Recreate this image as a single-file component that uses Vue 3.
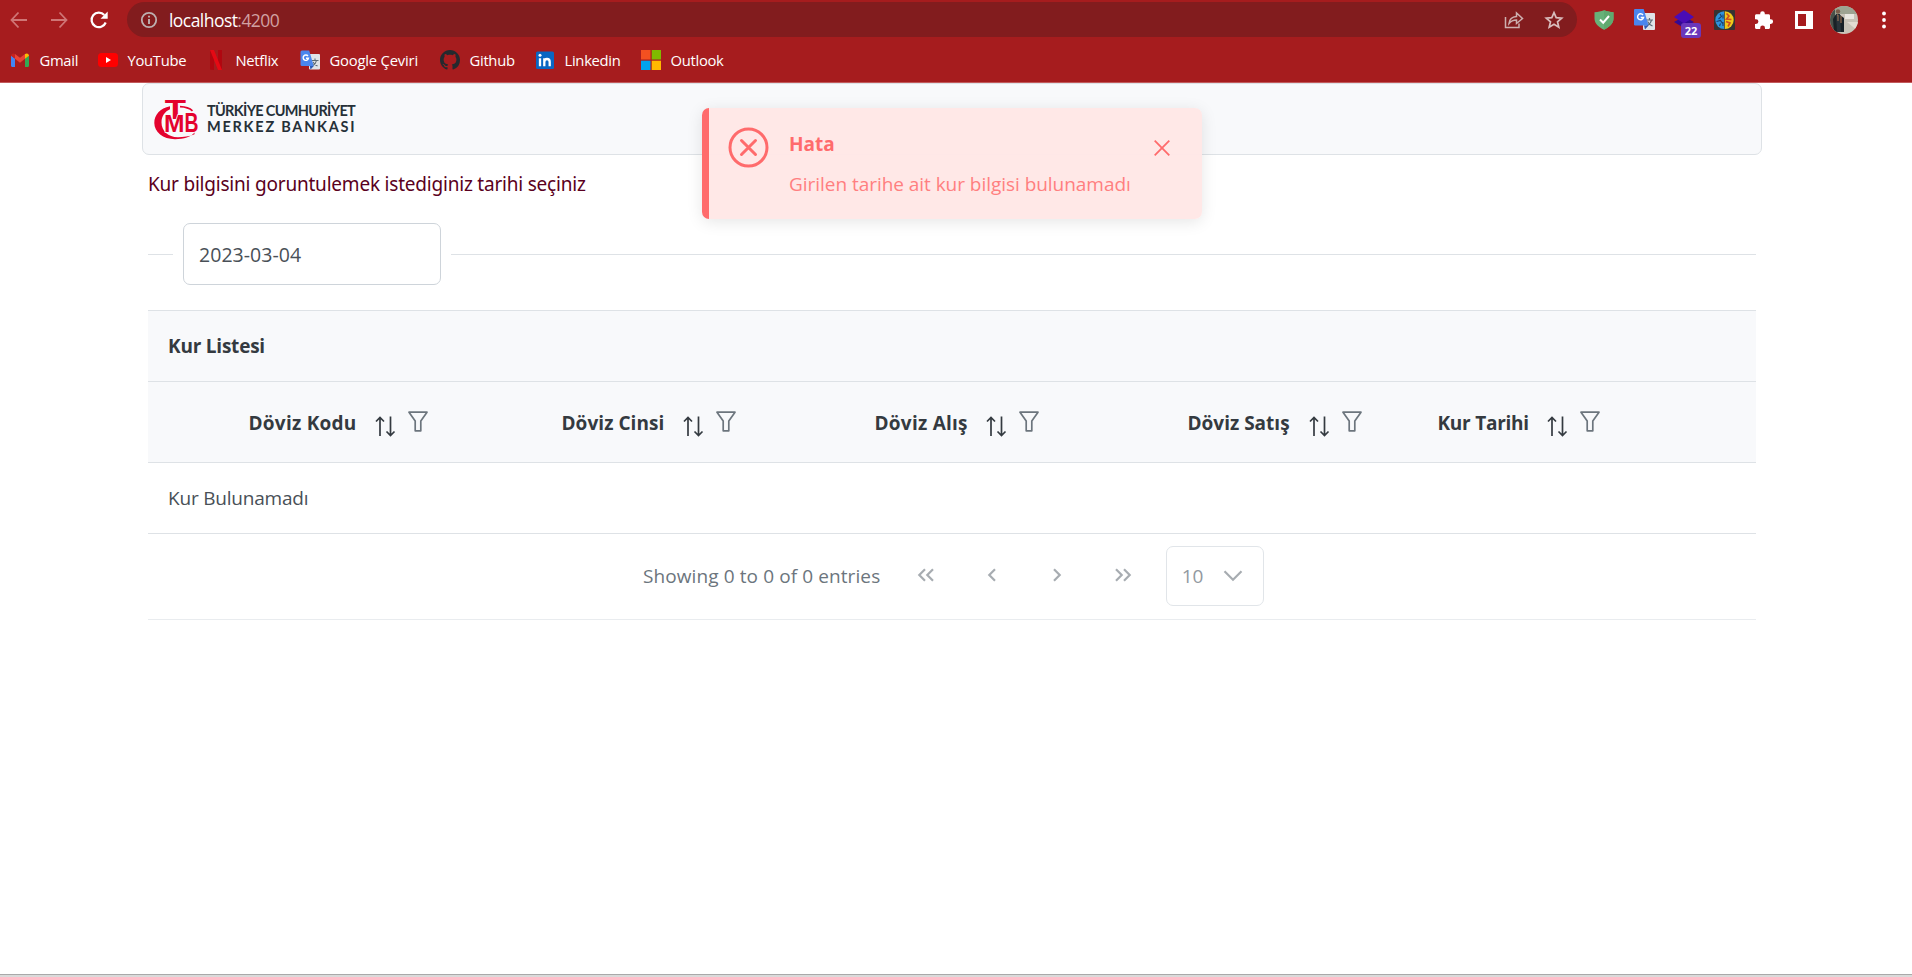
<script setup>
const bookmarks = [
  { name: 'Gmail', icon: 'gmail' },
  { name: 'YouTube', icon: 'youtube' },
  { name: 'Netflix', icon: 'netflix' },
  { name: 'Google Çeviri', icon: 'translate' },
  { name: 'Github', icon: 'github' },
  { name: 'Linkedin', icon: 'linkedin' },
  { name: 'Outlook', icon: 'outlook' },
]

const columns = [
  { label: 'Döviz Kodu', width: 108, spacing: 0.25 },
  { label: 'Döviz Cinsi', width: 103, spacing: 0.05 },
  { label: 'Döviz Alış', width: 93, spacing: 0.25 },
  { label: 'Döviz Satış', width: 103, spacing: 0 },
  { label: 'Kur Tarihi', width: 91, spacing: -0.25 },
]
</script>

<template>
  <div class="window">
    <header class="browser">
      <div class="toolbar">
        <div class="nav">
          <svg width="20" height="20" viewBox="0 0 20 20"><path d="M18 10H3M9.500 2.500L2.500 10l7 7.500" fill="none" stroke="#cf7676" stroke-width="1.800" /></svg>
          <svg width="20" height="20" viewBox="0 0 20 20"><path d="M2 10h15M10.500 2.500L17.500 10l-7 7.500" fill="none" stroke="#cf7676" stroke-width="1.800" /></svg>
          <svg width="20" height="20" viewBox="0 0 20 20"><path d="M16.700 12.500A7.300 7.300 0 1 1 15.300 5" fill="none" stroke="#fff" stroke-width="2.200" /><path d="M18.700 1.500v7.200h-7.200z" fill="#fff" /></svg>
        </div>
        <div class="address">
          <svg width="18" height="18" viewBox="0 0 18 18"><circle cx="9" cy="9" r="7.200" fill="none" stroke="#bdb0b0" stroke-width="1.800" /><path d="M9 8v5M9 4.700v1.800" stroke="#bdb0b0" stroke-width="1.900" /></svg>
          <span class="url">localhost<span class="port">:4200</span></span>
          <svg class="share" width="20" height="20" viewBox="0 0 20 20"><path d="M1.500 7v10.500h13.500V13.500M5 13.500C5.500 8.500 8.500 6.800 12.500 6.500V3l6 5.500-6 5v-3.500C9 10 7 11 5 13.500z" fill="none" stroke="#cdb0b0" stroke-width="1.500" /></svg>
          <svg width="20" height="20" viewBox="0 0 20 20"><path d="M10 2.600l2.200 5.100 5.500.5-4.200 3.600 1.300 5.400L10 14.300l-4.800 2.900 1.300-5.400-4.200-3.600 5.500-.5z" fill="none" stroke="#d8bcbc" stroke-width="1.700" /></svg>
        </div>
        <div class="extensions">
          <svg width="20" height="20" viewBox="0 0 20 20"><path d="M10 .3c3 1.200 6 1.800 9.500 1.900v6.300c0 5-4 8.500-9.500 11.300C4.500 17 .500 13.500 .500 8.500V2.200C4 2.100 7 1.500 10 .3z" fill="#67b279" /><path d="M10 .3c3 1.200 6 1.800 9.500 1.900v6.300c0 5-4 8.500-9.500 11.300z" fill="#5fa96f" /><path d="M6 9.500l3.200 3.200L15 6" fill="none" stroke="#fff" stroke-width="2" /></svg>
          <svg width="21" height="21" viewBox="0 0 21 21"><rect x="9" y="4" width="12" height="17" rx="1" fill="#dfe3e8" /><path d="M12 11h7M15.500 9v2M13 17c2.500-1.500 4-3.500 4.500-6M13.500 12.500c1 2 2.500 3.500 5 4.500" fill="none" stroke="#5b6b76" stroke-width="1.200" /><path d="M1.500 0h8.200l4.800 16.500H1.500A1.300 1.300 0 0 1 0 15V1.500A1.400 1.400 0 0 1 1.500 0z" fill="#4a86ee" /><path d="M10 16.500h4.500L11 20.500z" fill="#2b59b4" /><path d="M9 6a3 3 0 1 0 .5 2.600H6.700" fill="none" stroke="#fff" stroke-width="1.500" /></svg>
          <div class="layers">
            <svg width="20" height="19" viewBox="0 0 20 19"><path d="M10 6.500L20 12l-10 6L0 12z" fill="#330a93" /><path d="M10 0l10 7-10 6.500L0 7z" fill="#4a0cb5" /></svg>
            <span class="count">22</span>
          </div>
          <svg width="21" height="20" viewBox="0 0 21 20"><rect width="21" height="20" rx="1" fill="#353232" /><path d="M10.200 1.200a8.900 8.900 0 0 0 0 17.800z" fill="#2d93dc" /><path d="M10.800 1.200a8.900 8.900 0 0 1 0 17.800z" fill="#f0c91a" /><path d="M6 4l1.500 2.500L4.500 9M2.500 11.500l4-1 2 3M5.500 16l1-2.500M9 4.500v4M9 12v4" fill="none" stroke="#1b3f6d" stroke-width="1.100" /><path d="M12.500 3.500l2.500 2.500-2.500 3 5 .5M12 11.500l4 1.500-2 3.500" fill="none" stroke="#cf4c1f" stroke-width="1.600" /></svg>
          <svg width="20" height="20" viewBox="0 0 20 20"><path d="M8.500 1.200a2.300 2.300 0 0 1 2.300 2.300v.8h3.700c.9 0 1.500.6 1.500 1.500v3.500h.8a2.300 2.300 0 0 1 0 4.600H16v3.600c0 .9-.6 1.500-1.500 1.500H11v-1a2.400 2.400 0 0 0-4.800 0v1H2.500C1.600 19 1 18.400 1 17.500V14h1a2.400 2.400 0 0 0 0-4.800H1V5.800c0-.9.600-1.500 1.500-1.500h3.700v-.8a2.300 2.300 0 0 1 2.300-2.300z" fill="#fff" /></svg>
          <svg width="18" height="18" viewBox="0 0 18 18"><path d="M0 0h18v18H0zM3 3v12h8V3z" fill="#fff" fill-rule="evenodd" /></svg>
          <svg width="28" height="28" viewBox="0 0 28 28">
            <defs><clipPath id="avatar"><circle cx="14" cy="14" r="14" /></clipPath></defs>
            <g clip-path="url(#avatar)">
              <rect width="28" height="28" fill="#c9c4b8" /><rect width="28" height="8" fill="#9da492" /><rect width="5" height="28" fill="#48514a" />
              <path d="M15 8h9v5h-9z" fill="#e9e8e1" /><path d="M17 16l11 9v-9z" fill="#e3dcd2" />
              <path d="M3 13l3-5 4 1 4 3v14H4z" fill="#192126" /><path d="M6 8h4l1 18H7z" fill="#29333a" />
              <circle cx="8" cy="5.500" r="2.200" fill="#785d4c" /><path d="M7 9h1v6M11 10v7" stroke="#a97955" fill="none" />
            </g>
          </svg>
          <svg width="6" height="18" viewBox="0 0 6 18"><g fill="#fff"><circle cx="3" cy="2.500" r="1.900" /><circle cx="3" cy="9" r="1.900" /><circle cx="3" cy="15.500" r="1.900" /></g></svg>
        </div>
      </div>
      <nav class="bookmarks">
        <a v-for="b in bookmarks" :key="b.name" class="bookmark">
          <svg width="20" height="20" viewBox="0 0 20 20">
            <g v-if="b.icon === 'gmail'">
              <path d="M1 5.500v10c0 .8.600 1.500 1.300 1.500H5V8.500z" fill="#4285f4" /><path d="M15 8.500V17h2.700c.7 0 1.300-.7 1.300-1.500v-10z" fill="#34a853" />
              <path d="M5 8.800V4l5 3.800L15 4v4.800l-5 3.900z" fill="#ea4335" /><path d="M1 5.800c0-2.300 2.100-3.100 4-1.800v4.800z" fill="#c5221f" /><path d="M19 5.800c0-2.300-2.100-3.100-4-1.800v4.800z" fill="#fbbc04" />
            </g>
            <g v-else-if="b.icon === 'youtube'"><rect x="0" y="3" width="20" height="14" rx="3.500" fill="#f00" /><path d="M8 7l5 3-5 3z" fill="#fff" /></g>
            <g v-else-if="b.icon === 'netflix'"><path d="M4 0h4v20l-4-.4zM12 0h4v19.600l-4 .4z" fill="#b00710" /><path d="M4 0h4l8 20h-4z" fill="#e50914" /></g>
            <g v-else-if="b.icon === 'translate'">
              <rect x="9" y="4" width="11" height="15.500" rx="1" fill="#dfe3e8" /><path d="M12 10.500h6.500M15 8.500v2M12.500 16c2.500-1.500 3.500-3 4-5.500M13 12c1 2 2.500 3 4.500 4" fill="none" stroke="#5b6b76" stroke-width="1.100" />
              <path d="M2 .500h7.200l4.500 15.500H2A1.500 1.500 0 0 1 .500 14.500V2A1.500 1.500 0 0 1 2 .500z" fill="#4a86ee" /><path d="M9.800 16h4l-3.300 3.500z" fill="#2b59b4" /><path d="M8 6a2.700 2.700 0 1 0 .5 2.200H6" fill="none" stroke="#fff" stroke-width="1.400" />
            </g>
            <path v-else-if="b.icon === 'github'" transform="scale(1.25)" fill="#24292e" d="M8 0C3.580 0 0 3.580 0 8c0 3.540 2.290 6.530 5.470 7.590.4.070.55-.17.55-.38 0-.19-.01-.82-.01-1.490-2.010.37-2.530-.49-2.690-.94-.09-.23-.48-.94-.82-1.130-.28-.15-.68-.52-.01-.53.63-.01 1.080.58 1.230.82.72 1.210 1.870.87 2.330.66.07-.52.28-.87.51-1.070-1.780-.2-3.640-.89-3.640-3.950 0-.87.31-1.590.82-2.150-.08-.2-.36-1.020.08-2.120 0 0 .67-.21 2.200.82.64-.18 1.320-.27 2-.27s1.360.09 2 .27c1.530-1.040 2.200-.82 2.200-.82.44 1.100.16 1.920.08 2.120.51.56.82 1.270.82 2.150 0 3.070-1.870 3.750-3.650 3.950.29.25.54.73.54 1.480 0 1.070-.01 1.930-.01 2.200 0 .21.15.46.55.38A8.010 8.010 0 0 0 16 8c0-4.420-3.580-8-8-8z" />
            <g v-else-if="b.icon === 'linkedin'"><rect x="1" y="1.500" width="18" height="17.500" rx="1.500" fill="#0a66c2" /><path d="M5 8.200v8M9.300 16.200v-8M9.300 12c0-4 5.400-4 5.400 0v4.200" fill="none" stroke="#fff" stroke-width="2.300" /><circle cx="5" cy="5.300" r="1.500" fill="#fff" /></g>
            <g v-else><path d="M0 0h9.500v9.500H0z" fill="#f35020" /><path d="M10.700 0H20v9.500h-9.300z" fill="#7fb900" /><path d="M0 10.700h9.500V20H0z" fill="#00a3ee" /><path d="M10.700 10.700H20V20h-9.300z" fill="#ffb900" /></g>
          </svg>
          <span :class="['name', b.icon]">{{ b.name }}</span>
        </a>
      </nav>
    </header>

    <main class="page">
      <section class="brand">
        <svg width="54" height="52" viewBox="0 0 54 52">
          <path d="M20 14.200C10 16 4.300 23 4.300 31C4.300 40 13 47.200 25 47.200C34 47.200 41 45 44.500 40.500V42.300C39.500 44.500 33 45.300 28 45.300C18 45.300 11.500 38.500 11.500 30.500C11.500 24 15 19.500 20 17.300z" fill="#e4032e" />
          <path d="M30 14.600C35 14.800 39.500 16 42.500 18.800" fill="none" stroke="#e4032e" stroke-width="1.600" />
          <g fill="#e4032e" font-family="Liberation Sans, sans-serif" font-weight="700">
            <text x="14.700" y="26.500" font-size="28.500" textLength="21.300" lengthAdjust="spacingAndGlyphs">T</text>
            <text x="14" y="40" font-size="24" textLength="20.500" lengthAdjust="spacingAndGlyphs" stroke="#f8f9fb" stroke-width="1.600" paint-order="stroke">M</text>
            <text x="34.500" y="40" font-size="27.500" textLength="14" lengthAdjust="spacingAndGlyphs">B</text>
          </g>
        </svg>
        <div class="brand-name">
          <span class="brand-top">TÜRKİYE CUMHURİYET</span>
          <span class="brand-bottom">MERKEZ BANKASI</span>
        </div>
      </section>

      <p class="prompt">Kur bilgisini goruntulemek istediginiz tarihi seçiniz</p>

      <div class="divider">
        <div class="date">2023-03-04</div>
      </div>

      <section class="table">
        <div class="caption"><span>Kur Listesi</span></div>
        <div class="head">
          <div v-for="c in columns" :key="c.label" class="th">
            <span class="label" :style="{ width: c.width + 'px', letterSpacing: c.spacing + 'px' }">{{ c.label }}</span>
            <svg class="sort" width="21" height="21" viewBox="0 0 21 21"><path d="M5 20V1.500M1 5.500l4-4 4 4M15.500.500V19M11.500 15.500l4 4 4-4" fill="none" stroke="#343a40" stroke-width="1.700" /></svg>
            <svg class="filter" width="20" height="21" viewBox="0 0 20 21"><path d="M1 1.200h18L12.800 10v9.800H7.200V10z" fill="none" stroke="#6c757d" stroke-width="1.700" stroke-linejoin="round" /></svg>
          </div>
        </div>
        <div class="empty"><span>Kur Bulunamadı</span></div>
        <div class="paginator">
          <span class="summary">Showing 0 to 0 of 0 entries</span>
          <div class="pages">
            <svg width="18" height="14" viewBox="0 0 18 14"><path d="M8 1.300L2.300 7 8 12.700M16 1.300L10.300 7l5.700 5.700" /></svg>
            <svg width="18" height="14" viewBox="0 0 18 14"><path d="M12 1.300L6.300 7l5.700 5.700" /></svg>
            <svg width="18" height="14" viewBox="0 0 18 14"><path d="M6 1.300L11.700 7 6 12.700" /></svg>
            <svg width="18" height="14" viewBox="0 0 18 14"><path d="M2 1.300L7.700 7 2 12.700M10 1.300L15.700 7 10 12.700" /></svg>
          </div>
          <div class="rows">
            <span>10</span>
            <svg width="20" height="12" viewBox="0 0 20 12"><path d="M1.500 1.300L10 9.800l8.500-8.500" /></svg>
          </div>
        </div>
      </section>
    </main>

    <aside class="toast">
      <svg class="error" width="41" height="41" viewBox="0 0 41 41"><circle cx="20.500" cy="20.500" r="18.500" /><path d="M13.500 13.500l14 14M27.500 13.500l-14 14" stroke-linecap="round" /></svg>
      <div class="message">
        <strong>Hata</strong>
        <p>Girilen tarihe ait kur bilgisi bulunamadı</p>
      </div>
      <svg class="close" width="18" height="18" viewBox="0 0 18 18"><path d="M1.700 1.700l14.600 14.600M16.300 1.700L1.700 16.300" /></svg>
    </aside>

    <div class="shelf"></div>
  </div>
</template>

<style>
body { margin: 0; background: #fff; }
</style>

<style scoped>
* { box-sizing: border-box; }
svg { display: block; flex: none; }
.window { position: relative; display: flex; flex-direction: column; width: 1912px; height: 977px; overflow: hidden; background: #fff; font-family: "Open Sans", "Noto Sans", sans-serif; font-size: 19px; color: #495057; white-space: nowrap; }
.browser { height: 83px; background: #a61c1e; border-bottom: 1px solid #c25a5c; }
.toolbar { display: flex; height: 39px; }
.nav { display: flex; gap: 20px; width: 127px; padding-left: 9px; align-items: center; }
.address { display: flex; align-items: center; width: 1450px; height: 35px; margin-top: 2px; padding: 0 13px 0 13px; border-radius: 18px; background: #821c1e; }
.url { flex: 1; margin-left: 11px; font-size: 17.5px; line-height: 24px; letter-spacing: -0.55px; color: #fff; }
.port { color: #d1a1a2; }
.share { margin-right: 20px; }
.extensions { display: grid; grid-template-columns: repeat(8, 40px); margin-left: 7px; place-items: center; }
.layers { position: relative; }
.count { position: absolute; left: 7px; top: 13px; width: 20px; height: 15px; border-radius: 3px; background: #6a37ba; color: #fff; font-size: 11px; font-weight: 700; line-height: 16px; text-align: center; }
.bookmarks { display: grid; grid-template-columns: 88px 108px 94px 140px 95px 106px 100px; padding: 11px 0 0 10px; }
.bookmark { display: flex; gap: 9.500px; height: 20px; align-items: center; }
.name { font-size: 14.8px; line-height: 20px; letter-spacing: -0.3px; color: #fff; }
.name.translate { letter-spacing: -0.2px; }
.page { width: 1620px; margin-left: 142px; }
.brand { display: flex; height: 72px; border: 1px solid #dee2e6; border-radius: 7px; background: #f8f9fb; padding: 8px 7px; }
.brand-name { display: flex; flex-direction: column; margin: 11px 0 0 3px; font-family: Lato, sans-serif; font-size: 14.5px; font-weight: 700; line-height: 16px; color: #263038; }
.brand-top { letter-spacing: -0.68px; }
.brand-bottom { letter-spacing: 1.75px; }
.prompt { margin: 16px 0 0 6px; font-family: "Noto Sans", sans-serif; line-height: 26px; letter-spacing: -0.21px; color: #5a0020; }
.divider { display: flex; align-items: center; height: 62px; margin: 26px 6px 25px; }
.divider::before, .divider::after { content: ""; height: 1px; background: #dee2e6; }
.divider::before { width: 25px; margin-right: 10px; }
.divider::after { flex: 1; margin-left: 10px; }
.date { width: 258px; height: 62px; padding-left: 15px; border: 1px solid #ced4da; border-radius: 7px; font-size: 19.5px; line-height: 61px; letter-spacing: 0.05px; }
.table { margin: 0 6px; }
.caption { height: 72px; padding-left: 20px; border: solid #dee2e6; border-width: 1px 0; background: #f8f9fb; color: #343a40; font-weight: 700; letter-spacing: -0.22px; line-height: 71px; }
.head { display: grid; grid-template-columns: repeat(3, 313px) 250px 1fr; height: 81px; padding-left: 100.500px; border-bottom: 1px solid #dee2e6; background: #f8f9fb; color: #343a40; font-weight: 700; line-height: 83px; }
.th { display: flex; }
.sort { margin: 34px 0 0 18px; }
.filter { margin: 29px 0 0 12px; }
.empty { height: 71px; padding-left: 20px; border-bottom: 1px solid #dee2e6; line-height: 71px; letter-spacing: -0.2px; }
.paginator { display: flex; align-items: center; height: 86px; padding: 0 0 1px 495px; border-bottom: 1px solid #e9ecef; color: #6c757d; }
.summary { width: 237px; letter-spacing: 0.1px; }
.pages { display: grid; grid-template-columns: repeat(4, 65.700px); justify-items: center; margin: 0 0 2px 13px; }
.pages svg, .rows svg { fill: none; stroke: #a7acb1; stroke-width: 2.200; }
.rows { display: flex; align-items: center; width: 98px; height: 60px; margin-left: 10px; padding-left: 15px; border: 1px solid #e1e5e9; border-radius: 7px; color: #9299a0; }
.rows span { width: 41px; }
.toast { position: absolute; left: 702px; top: 108px; display: flex; width: 500px; height: 111px; border-left: 7px solid #ff6b6c; border-radius: 7px; background: rgba(255, 231, 230, 0.97); color: #ff6b6c; box-shadow: 0 3px 16px rgba(0, 0, 0, 0.1); }
.error { margin: 19px 0 0 19px; fill: none; stroke: #ff6b6c; stroke-width: 3; }
.message { width: 364px; margin: 22px 0 0 20px; line-height: 28px; }
.message strong { display: block; }
.message p { margin: 12px 0 0; color: #ff7f80; letter-spacing: -0.04px; }
.close { margin-top: 31px; fill: none; stroke: #ff6b6c; stroke-width: 1.800; }
.shelf { height: 3px; margin-top: auto; border-top: 1px solid #a9a9a9; background: #dadada; }
</style>
